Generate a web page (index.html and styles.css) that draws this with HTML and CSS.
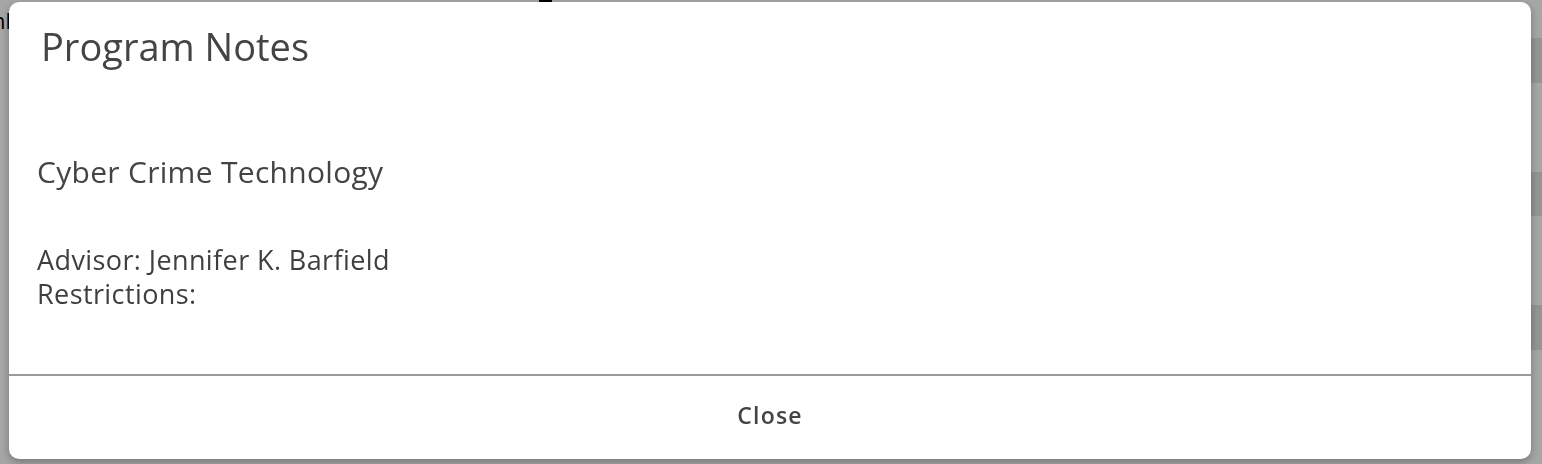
FILE: index.html
```html
<!DOCTYPE html>
<html lang="en">
<head>
<meta charset="utf-8">
<title>Program Notes</title>
<link rel="stylesheet" href="styles.css">
</head>
<body>
<div class="page">
  <div class="page-top"><span class="page-frag">nl</span><span class="page-mark"></span></div>
  <div class="rows">
    <div class="row row-b"></div>
    <div class="row row-a tall"></div>
    <div class="row row-b short"></div>
    <div class="row row-a tall"></div>
    <div class="row row-b"></div>
    <div class="row row-a tall"></div>
  </div>
</div>
<div class="overlay">
  <div class="modal">
    <div class="modal-header">
      <h4 class="modal-title">Program Notes</h4>
    </div>
    <div class="modal-body">
      <p class="program-name">Cyber Crime Technology</p>
      <div class="program-info">
        <div class="info-line">Advisor: Jennifer K. Barfield</div>
        <div class="info-line">Restrictions:</div>
      </div>
    </div>
    <div class="modal-footer">
      <button class="btn-close" type="button">Close</button>
    </div>
  </div>
</div>
</body>
</html>
```
FILE: styles.css
```css
html, body {
  margin: 0;
  padding: 0;
  height: 100%;
}
body {
  font-family: "Open Sans", "Noto Sans", sans-serif;
  background: #fff;
  color: #3f3f3f;
  overflow: hidden;
}
.page {
  height: 100%;
  display: flex;
  flex-direction: column;
}
.page-top {
  height: 38px;
  display: flex;
  align-items: flex-start;
  position: relative;
}
.page-frag {
  font-size: 22px;
  color: #000;
  margin-left: -8px;
  line-height: 40px;
}
.page-mark {
  position: absolute;
  left: 539px;
  top: 0;
  width: 13px;
  height: 6px;
  background: #000;
}
.rows {
  display: flex;
  flex-direction: column;
  margin-left: 50%;
}
.row { height: 45px; }
.row.short { height: 44px; }
.row.tall { height: 89px; }
.row-a { background: #ffffff; }
.row-b { background: #e4e4e4; }

.overlay {
  position: fixed;
  inset: 0;
  background: rgba(0, 0, 0, 0.35);
  padding: 2px 11px 5px 9px;
  box-sizing: border-box;
  display: flex;
}
.modal {
  flex: 1;
  background: #fff;
  border-radius: 10px;
  box-shadow: 0 3px 9px rgba(0, 0, 0, 0.3);
  display: flex;
  flex-direction: column;
  overflow: hidden;
}
.modal-header {
  padding: 22px 32px 0 32px;
}
.modal-title {
  margin: 0;
  font-size: 38px;
  font-weight: 400;
  line-height: 44px;
  color: #444;
}
.modal-body {
  flex: 1;
  padding: 0 28px;
}
.program-name {
  margin: 86px 0 0 0;
  font-size: 30px;
  line-height: 36px;
  letter-spacing: 0.3px;
  color: #444;
}
.program-info {
  margin-top: 53px;
  font-size: 27px;
  line-height: 34px;
  letter-spacing: 0.4px;
  color: #3f3f3f;
}
.modal-footer {
  border-top: 2px solid #9a9a9a;
  height: 85px;
  box-sizing: border-box;
  display: flex;
  align-items: center;
  justify-content: center;
  padding-bottom: 6px;
}
.btn-close {
  font-family: inherit;
  font-size: 23px;
  font-weight: 600;
  letter-spacing: 1.2px;
  color: #444;
  background: none;
  border: none;
  padding: 0;
  cursor: pointer;
}
```
